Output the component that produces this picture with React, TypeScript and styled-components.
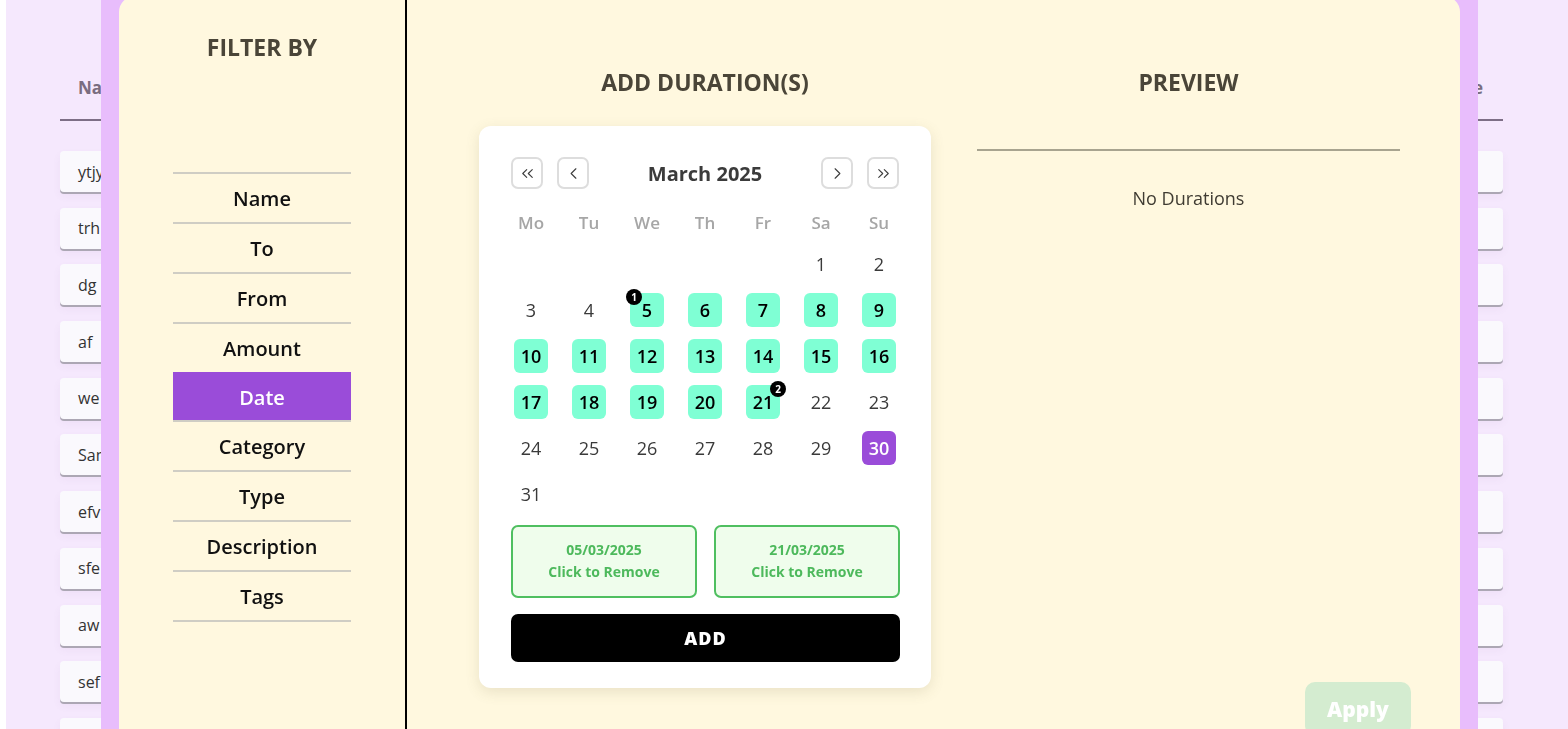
import React from "react";
import styled, { createGlobalStyle } from "styled-components";
import { ChevronLeft, ChevronRight, ChevronsLeft, ChevronsRight } from "lucide-react";

const FONT = `"Open Sans", "Noto Sans", sans-serif`;

const GlobalStyle = createGlobalStyle`
  html, body { margin: 0; padding: 0; background: #ffffff; }
  body { font-family: ${FONT}; overflow: hidden; }
  * { box-sizing: border-box; }
`;

const Page = styled.div`
  margin-left: 6px;
  height: 729px;
  background: #f5e8fd;
  padding: 0 65px 0 54px;
  overflow: hidden;
`;

const TableHeader = styled.div`
  height: 121px;
  display: flex;
  align-items: flex-end;
  justify-content: space-between;
  padding: 0 20px 19px 18px;
  border-bottom: 2px solid #7d6e86;
`;

const HeaderCell = styled.span`
  font-size: 17px;
  font-weight: 700;
  line-height: 24px;
  color: #7a6d80;
`;

const RowList = styled.div`
  display: flex;
  flex-direction: column;
  gap: 15.7px;
  margin-top: 30px;
`;

const TableRow = styled.div`
  height: 41px;
  flex-shrink: 0;
  display: flex;
  align-items: center;
  padding-left: 18px;
  background: #faf9fd;
  border-radius: 4px;
  box-shadow: 0 2px 0 #aca7b4, 0 4px 8px rgba(120, 90, 140, 0.06);
  font-size: 16px;
  color: #333;
`;

const Overlay = styled.div`
  position: fixed;
  left: 101px;
  top: 0;
  width: 1377px;
  height: 729px;
  background: #e8bdfc;
  padding: 0 18px;
`;

const Panel = styled.div`
  margin-top: -4px;
  height: 800px;
  background: #fff8df;
  border-radius: 16px;
  display: flex;
  overflow: hidden;
`;

const FilterColumn = styled.aside`
  width: 288px;
  flex-shrink: 0;
  border-right: 2px solid #000;
  display: flex;
  flex-direction: column;
  align-items: center;
  padding-top: 36px;
`;

const SectionTitle = styled.h2`
  margin: 0;
  font-size: 23px;
  font-weight: 700;
  line-height: 30px;
  color: #4a4538;
  text-align: center;
`;

const FilterList = styled.ul`
  list-style: none;
  margin: 110px 0 0;
  padding: 0;
  width: 178px;
  border-top: 2px solid #cfcdc4;
`;

const FilterItem = styled.li<{ $active?: boolean }>`
  height: 50px;
  display: flex;
  align-items: center;
  justify-content: center;
  border-bottom: 2px solid #cfcdc4;
  font-size: 20px;
  font-weight: 600;
  color: ${(p) => (p.$active ? "#ffffff" : "#111111")};
  background: ${(p) => (p.$active ? "#9a4cd9" : "transparent")};
  margin-top: ${(p) => (p.$active ? "-2px" : "0")};
  padding-top: ${(p) => (p.$active ? "2px" : "0")};
`;

const MainArea = styled.section`
  flex: 1;
  padding: 71px 0 0 72px;
`;

const Columns = styled.div`
  display: flex;
  gap: 46px;
`;

const DurationColumn = styled.div`
  width: 452px;
  display: flex;
  flex-direction: column;
  padding-bottom: 48px;
`;

const PreviewColumn = styled.div`
  width: 423px;
  display: flex;
  flex-direction: column;
`;

const Card = styled.div`
  margin-top: 29px;
  background: #ffffff;
  border-radius: 12px;
  padding: 31px 23px 26px;
  box-shadow: 0 4px 14px rgba(120, 110, 70, 0.16);
  display: flex;
  flex-direction: column;
`;

const NavRow = styled.div`
  display: flex;
  align-items: center;
  gap: 14px;
  padding: 0 9px;
  height: 32px;
`;

const NavButton = styled.button`
  width: 32px;
  height: 32px;
  border: 2px solid #dddddd;
  border-radius: 7px;
  background: #ffffff;
  display: flex;
  align-items: center;
  justify-content: center;
  padding: 0;
  color: #3c3c3c;
`;

const MonthTitle = styled.div`
  flex: 1;
  text-align: center;
  font-size: 20px;
  font-weight: 700;
  color: #3b3b3b;
`;

const WeekRow = styled.div`
  display: grid;
  grid-template-columns: repeat(7, 58px);
  margin-top: 22px;
  height: 22px;
  align-items: center;
`;

const WeekDay = styled.span`
  text-align: center;
  font-size: 17px;
  font-weight: 600;
  color: #a6a6a6;
`;

const DayGrid = styled.div`
  display: grid;
  grid-template-columns: repeat(7, 58px);
  grid-auto-rows: 46px;
  margin-top: 8px;
`;

const DayCell = styled.div`
  display: flex;
  align-items: center;
  justify-content: center;
`;

type Tone = "plain" | "range" | "today";

const DayNum = styled.div<{ $tone: Tone }>`
  position: relative;
  width: 34px;
  height: 34px;
  border-radius: 6px;
  display: flex;
  align-items: center;
  justify-content: center;
  font-size: 18px;
  font-weight: ${(p) => (p.$tone === "plain" ? 500 : 600)};
  color: ${(p) => (p.$tone === "today" ? "#ffffff" : p.$tone === "range" ? "#000000" : "#3a3a3a")};
  background: ${(p) => (p.$tone === "today" ? "#9a4cd9" : p.$tone === "range" ? "#7fffd4" : "transparent")};
`;

const Badge = styled.span<{ $side: "left" | "right" }>`
  position: absolute;
  top: -4px;
  ${(p) => (p.$side === "left" ? "left: -4px;" : "right: -6px;")}
  width: 16px;
  height: 16px;
  border-radius: 50%;
  background: #000;
  color: #fff;
  font-size: 10px;
  font-weight: 700;
  display: flex;
  align-items: center;
  justify-content: center;
  line-height: 1;
`;

const ChosenRow = styled.div`
  display: grid;
  grid-template-columns: 1fr 1fr;
  gap: 17px;
  margin: 8px 8px 0 9px;
`;

const ChosenBox = styled.button`
  height: 73px;
  border: 2px solid #4fbf60;
  border-radius: 7px;
  background: #effdec;
  color: #4db95c;
  font-family: ${FONT};
  font-size: 14px;
  font-weight: 700;
  line-height: 22px;
  display: flex;
  flex-direction: column;
  align-items: center;
  justify-content: center;
  padding: 0 0 2px;
`;

const AddButton = styled.button`
  display: block;
  margin: 16px 8px 0 9px;
  height: 48px;
  border: none;
  border-radius: 7px;
  background: #000;
  color: #fff;
  font-family: ${FONT};
  font-size: 18px;
  font-weight: 800;
  letter-spacing: 1px;
`;

const Divider = styled.div`
  margin-top: 52px;
  height: 2px;
  background: #a8a48f;
`;

const EmptyText = styled.p`
  margin: 35px 0 0;
  text-align: center;
  font-size: 18px;
  line-height: 24px;
  color: #3f3b32;
`;

const ApplyButton = styled.button`
  margin-top: auto;
  align-self: flex-end;
  margin-right: -11px;
  width: 106px;
  height: 54px;
  border: none;
  border-radius: 10px;
  background: #d4ecd0;
  color: #ffffff;
  font-family: ${FONT};
  font-size: 21px;
  font-weight: 800;
`;

const rows = ["ytjy", "trh", "dg", "af", "we", "Sam", "efv", "sfe", "aw", "sef", ""];
const filters = ["Name", "To", "From", "Amount", "Date", "Category", "Type", "Description", "Tags"];
const weekDays = ["Mo", "Tu", "We", "Th", "Fr", "Sa", "Su"];

const RANGE_START = 5;
const RANGE_END = 21;
const TODAY = 30;

function Calendar() {
  const cells: (number | null)[] = [...Array(5).fill(null), ...Array.from({ length: 31 }, (_, i) => i + 1)];
  return (
    <Card>
      <NavRow>
        <NavButton aria-label="previous year"><ChevronsLeft size={19} strokeWidth={1.4} /></NavButton>
        <NavButton aria-label="previous month"><ChevronLeft size={19} strokeWidth={1.4} /></NavButton>
        <MonthTitle>March 2025</MonthTitle>
        <NavButton aria-label="next month"><ChevronRight size={19} strokeWidth={1.4} /></NavButton>
        <NavButton aria-label="next year"><ChevronsRight size={19} strokeWidth={1.4} /></NavButton>
      </NavRow>
      <WeekRow>
        {weekDays.map((d) => (
          <WeekDay key={d}>{d}</WeekDay>
        ))}
      </WeekRow>
      <DayGrid>
        {cells.map((d, i) => {
          if (d === null) return <DayCell key={`e${i}`} />;
          const tone: Tone = d === TODAY ? "today" : d >= RANGE_START && d <= RANGE_END ? "range" : "plain";
          return (
            <DayCell key={d}>
              <DayNum $tone={tone}>
                {d}
                {d === RANGE_START && <Badge $side="left">1</Badge>}
                {d === RANGE_END && <Badge $side="right">2</Badge>}
              </DayNum>
            </DayCell>
          );
        })}
      </DayGrid>
      <ChosenRow>
        <ChosenBox>
          <span>05/03/2025</span>
          <span>Click to Remove</span>
        </ChosenBox>
        <ChosenBox>
          <span>21/03/2025</span>
          <span>Click to Remove</span>
        </ChosenBox>
      </ChosenRow>
      <AddButton>ADD</AddButton>
    </Card>
  );
}

export default function App() {
  return (
    <>
      <GlobalStyle />
      <Page>
        <TableHeader>
          <HeaderCell>Name</HeaderCell>
          <HeaderCell>Date</HeaderCell>
        </TableHeader>
        <RowList>
          {rows.map((r, i) => (
            <TableRow key={i}>{r}</TableRow>
          ))}
        </RowList>
      </Page>
      <Overlay>
        <Panel>
          <FilterColumn>
            <SectionTitle>FILTER BY</SectionTitle>
            <FilterList>
              {filters.map((f) => (
                <FilterItem key={f} $active={f === "Date"}>
                  {f}
                </FilterItem>
              ))}
            </FilterList>
          </FilterColumn>
          <MainArea>
            <Columns>
              <DurationColumn>
                <SectionTitle>ADD DURATION(S)</SectionTitle>
                <Calendar />
              </DurationColumn>
              <PreviewColumn>
                <SectionTitle>PREVIEW</SectionTitle>
                <Divider />
                <EmptyText>No Durations</EmptyText>
                <ApplyButton>Apply</ApplyButton>
              </PreviewColumn>
            </Columns>
          </MainArea>
        </Panel>
      </Overlay>
    </>
  );
}
